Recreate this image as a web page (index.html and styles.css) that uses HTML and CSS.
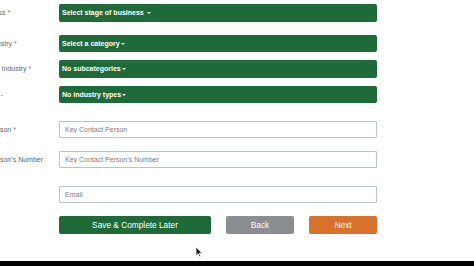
FILE: index.html
```html
<!DOCTYPE html>
<html lang="en">
<head>
    <meta charset="UTF-8">
    <title>Business Details</title>
    <link rel="stylesheet" href="styles.css">
</head>
<body>
    <form class="form">
        <div class="row gap-md">
            <label class="label">Stage of Business <span class="req">*</span></label>
            <div class="select">Select stage of business <span class="caret"></span></div>
        </div>
        <div class="row gap-sm">
            <label class="label">Category of Industry <span class="req">*</span></label>
            <div class="select">Select a category<span class="caret"></span></div>
        </div>
        <div class="row gap-sm">
            <label class="label">Sub Category of Industry <span class="req">*</span></label>
            <div class="select">No subcategories<span class="caret"></span></div>
        </div>
        <div class="row gap-lg">
            <label class="label">Type of Industry -</label>
            <div class="select">No industry types<span class="caret"></span></div>
        </div>
        <div class="row gap-md">
            <label class="label">Key Contact Person <span class="req">*</span></label>
            <input class="input" type="text" placeholder="Key Contact Person">
        </div>
        <div class="row gap-lg">
            <label class="label">Key Contact Person’s Number</label>
            <input class="input" type="text" placeholder="Key Contact Person’s Number">
        </div>
        <div class="row gap-md">
            <label class="label">Email</label>
            <input class="input" type="text" placeholder="Email">
        </div>
        <div class="row">
            <span class="label"></span>
            <div class="actions">
                <button type="button" class="btn btn-save">Save &amp; Complete Later</button>
                <button type="button" class="btn btn-back">Back</button>
                <button type="button" class="btn btn-next">Next</button>
            </div>
        </div>
    </form>

    <div class="taskbar"></div>

    <svg class="cursor" width="8" height="12" viewBox="0 0 8 12">
        <path d="M1 1 L1 9.5 L3 7.6 L4.6 11 L5.8 10.4 L4.3 7.2 L7 7.2 Z" fill="#111" stroke="#fff" stroke-width="0.8"/>
    </svg>
</body>
</html>
```

FILE: styles.css
```css
body {
    margin: 0;
    min-height: 100vh;
    display: flex;
    flex-direction: column;
    background: #fff;
    font-family: "Liberation Sans", Arial, sans-serif;
    overflow: hidden;
}

.form {
    margin: 4px 0 0 -51px;
}

.row {
    display: grid;
    grid-template-columns: 110px 318px;
    align-items: center;
}

.gap-sm { margin-bottom: 8px; }
.gap-md { margin-bottom: 13px; }
.gap-lg { margin-bottom: 18px; }

.label {
    font-size: 7px;
    color: #666;
    white-space: nowrap;
}

.req {
    color: #9a6b6b;
}

.select {
    height: 17.5px;
    line-height: 17.5px;
    padding: 0 3px;
    background: #1e6b39;
    border-radius: 2px;
    color: #fff;
    font-size: 7px;
    font-weight: bold;
    box-sizing: border-box;
}

.caret {
    display: inline-block;
    vertical-align: middle;
    border-left: 2px solid transparent;
    border-right: 2px solid transparent;
    border-top: 2px solid #fff;
    margin-left: 1px;
}

.input {
    height: 17px;
    margin: 0;
    padding: 0 5px;
    border: 1px solid #b8c5c2;
    border-radius: 1px;
    font-family: "Liberation Sans", Arial, sans-serif;
    font-size: 7px;
    color: #444;
    box-sizing: border-box;
    width: 100%;
}

.input::placeholder {
    color: #7d7d7d;
}

.actions {
    display: flex;
    gap: 15px;
}

.btn {
    height: 17.5px;
    padding: 0;
    border: none;
    border-radius: 2px;
    color: #fff;
    font-family: "Liberation Sans", Arial, sans-serif;
    font-size: 8.3px;
}

.btn-save {
    width: 152px;
    background: #1e6b39;
}

.btn-back {
    width: 68px;
    background: #8b8d91;
}

.btn-next {
    width: 68px;
    background: #d8712b;
}

.taskbar {
    margin-top: auto;
    height: 5px;
    background: #000;
}

.cursor {
    position: absolute;
    left: 195px;
    top: 246px;
}
```
